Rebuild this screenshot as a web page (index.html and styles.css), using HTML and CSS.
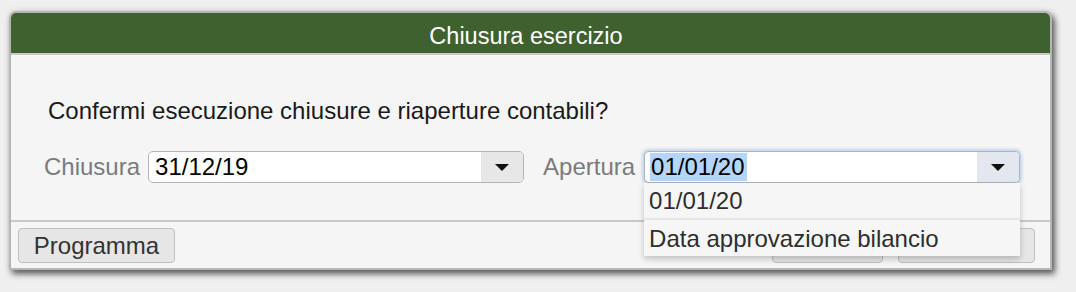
FILE: index.html
```html
<!DOCTYPE html>
<html lang="it">
<head>
<meta charset="utf-8">
<title>Chiusura esercizio</title>
<link rel="stylesheet" href="styles.css">
</head>
<body>
<div class="page">
  <div class="dialog">
    <div class="header">Chiusura esercizio</div>
    <div class="content">
      <p class="question">Confermi esecuzione chiusure e riaperture contabili?</p>
      <div class="fields">
        <label class="label">Chiusura</label>
        <div class="combo">
          <div class="combo-value">31/12/19</div>
          <div class="combo-arrow"><span class="tri"></span></div>
        </div>
        <label class="label label-second">Apertura</label>
        <div class="combo-wrap">
          <div class="combo combo-focus">
            <div class="combo-value"><span class="sel">01/01/20</span></div>
            <div class="combo-arrow"><span class="tri"></span></div>
          </div>
          <ul class="dropdown">
            <li class="option">01/01/20</li>
            <li class="option">Data approvazione bilancio</li>
          </ul>
        </div>
      </div>
    </div>
    <div class="footer">
      <button class="btn btn-program">Programma</button>
      <div class="footer-right">
        <button class="btn btn-ok" aria-label="OK"></button>
        <button class="btn btn-cancel" aria-label="Annulla"></button>
      </div>
    </div>
  </div>
</div>
</body>
</html>
```

FILE: styles.css
```css
html, body {
  margin: 0;
  padding: 0;
}
body {
  background: #efefef;
  font-family: "Liberation Sans", Arial, sans-serif;
  width: 1076px;
  height: 292px;
  overflow: hidden;
}
.page {
  padding: 11px 0 0 9px;
}
.dialog {
  width: 1039px;
  background: #f5f5f5;
  border: 2px solid #b6b6b6;
  border-radius: 7px 7px 0 0;
  box-shadow: 3px 4px 6px rgba(0, 0, 0, 0.6), 0 0 6px rgba(0, 0, 0, 0.12);
}
.header {
  height: 40px;
  background: #3f6130;
  border-bottom: 2px solid #c9c9c9;
  border-radius: 5px 5px 0 0;
  color: #ffffff;
  font-size: 23.5px;
  line-height: 46px;
  text-align: center;
  padding-right: 9px;
}
.content {
  padding: 42px 0 37px 0;
}
.question {
  margin: 0 0 26px 0;
  padding-left: 37px;
  font-size: 24px;
  line-height: 28px;
  color: #1a1a1a;
}
.fields {
  display: flex;
  align-items: center;
  padding-left: 33px;
  height: 32px;
}
.label {
  font-size: 24px;
  color: #7b7b7b;
  margin-right: 8px;
  line-height: 32px;
}
.label-second {
  margin-left: 19px;
  margin-right: 9px;
}
.combo-wrap {
  position: relative;
}
.combo {
  display: flex;
  width: 376px;
  height: 32px;
  box-sizing: border-box;
  border: 1px solid #b5b5b5;
  border-radius: 5px;
  background: #ffffff;
  overflow: hidden;
}
.combo-value {
  flex: 1;
  font-size: 24px;
  line-height: 30px;
  color: #000;
  padding-left: 6px;
}
.combo-arrow {
  width: 42px;
  background: #e7e7e7;
  display: flex;
  align-items: center;
  justify-content: center;
}
.tri {
  width: 0;
  height: 0;
  border-left: 7px solid transparent;
  border-right: 7px solid transparent;
  border-top: 7px solid #111;
}
.combo-focus {
  border-color: #a9b4c4;
  box-shadow: 0 0 3px 2px rgba(130, 170, 225, 0.45);
}
.combo-focus .combo-arrow {
  background: #e3e8ef;
}
.sel {
  background: #b4d5fd;
  padding: 0 2px 0 1px;
  margin-left: -1px;
  display: inline-block;
  line-height: 28px;
}
.dropdown {
  position: absolute;
  left: 0;
  top: 32px;
  width: 376px;
  margin: 0;
  padding: 0;
  list-style: none;
  background: #f6f6f6;
  box-shadow: 0 3px 6px rgba(0, 0, 0, 0.22);
  z-index: 10;
}
.option {
  font-size: 24px;
  color: #2e2e2e;
  padding-left: 5px;
  height: 35px;
  line-height: 35px;
}
.option + .option {
  border-top: 2px solid #e6e6e6;
  height: 36px;
  line-height: 38px;
}
.footer {
  display: flex;
  justify-content: space-between;
  border-top: 2px solid #c9c9c9;
  padding: 6px 15px 5px 7px;
}
.footer-right {
  display: flex;
  gap: 15px;
}
.btn {
  height: 35px;
  box-sizing: border-box;
  border: 1px solid #c0c0c0;
  border-radius: 4px;
  background: #e6e6e6;
  font-family: "Liberation Sans", Arial, sans-serif;
  font-size: 24px;
  color: #333333;
  line-height: 33px;
  padding: 0;
}
.btn-program {
  width: 157px;
}
.btn-ok {
  width: 111px;
}
.btn-cancel {
  width: 137px;
}
```
